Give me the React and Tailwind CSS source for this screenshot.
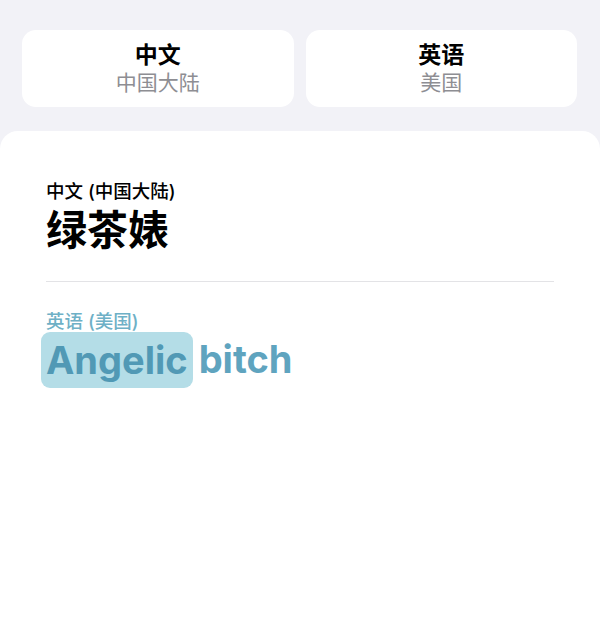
import React from 'react';

const FONT = { fontFamily: 'Inter, "Noto Sans CJK SC", "Noto Sans", sans-serif' };

const LangCard = ({ title, region }) => (
  <div className="flex-1 h-[77px] rounded-[14px] bg-white flex flex-col items-center justify-center">
    <span className="text-[23px] leading-[28px] font-bold text-black">{title}</span>
    <span className="text-[21px] leading-[28px] text-[#8e8e93]">{region}</span>
  </div>
);

export default function App() {
  return (
    <div className="w-[600px] h-[640px] bg-[#f2f2f7] flex flex-col overflow-hidden" style={FONT}>
      <div className="flex gap-3 pt-[30px] pl-[22px] pr-[23px]">
        <LangCard title="中文" region="中国大陆" />
        <LangCard title="英语" region="美国" />
      </div>

      <div className="mt-[24px] flex-1 bg-white rounded-t-[18px] px-[46px] pt-[48px]">
        <div className="text-[18.5px] leading-[24px] font-medium text-black">中文 (中国大陆)</div>
        <div className="mt-[2px] text-[41px] leading-[50px] font-bold text-black">绿茶婊</div>

        <div className="mt-[26px] h-px bg-[#e3e3e6]" />

        <div className="mt-[27px] text-[18.5px] leading-[24px] font-medium text-[#6eb0c6]">英语 (美国)</div>
        <div className="-mt-[2px] flex items-center text-[38px] font-bold text-[#5199b5]">
          <span className="-ml-[5px] px-[5px] h-[56px] leading-[56px] rounded-[9px] bg-[#b4dde7]">Angelic</span>
          <span className="ml-[6px] text-[#5fa4bf]">bitch</span>
        </div>
      </div>
    </div>
  );
}
